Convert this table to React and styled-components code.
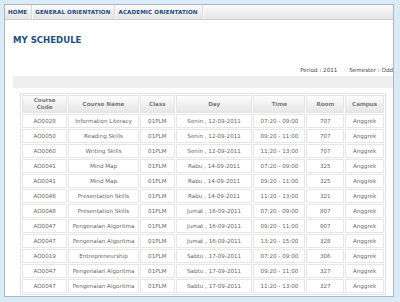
import React from 'react';
import styled, { createGlobalStyle } from 'styled-components';

const GlobalStyle = createGlobalStyle`
  html, body {
    margin: 0;
    padding: 0;
    background: #d9ebf6;
  }
  body {
    font-family: "DejaVu Sans", Verdana, sans-serif;
  }
`;

const Frame = styled.div`
  width: 400px;
  height: 302px;
  padding: 4px 6px 4px 4px;
  box-sizing: border-box;
  overflow: hidden;
`;

const Panel = styled.div`
  background: #fff;
  border: 1px solid #aab6c0;
  height: 293px;
  box-sizing: border-box;
  overflow: hidden;
`;

const NavBar = styled.nav`
  display: flex;
  align-items: stretch;
  height: 14px;
  background: linear-gradient(to bottom, #fbfbfb, #e4e4e4);
  border-bottom: 1px solid #cfcfcf;
`;

const NavItem = styled.a`
  display: flex;
  align-items: center;
  padding: 0 4px 0 3px;
  font-size: 5.6px;
  font-weight: bold;
  color: #1d4c7c;
  letter-spacing: 0.1px;
  border-right: 1px solid #dadada;
  box-shadow: 1px 0 0 #fff;
  text-decoration: none;
`;

const Content = styled.div`
  padding: 14px 0 0 8px;
`;

const Title = styled.h1`
  margin: 0;
  font-family: "DejaVu Sans Condensed", "DejaVu Sans", sans-serif;
  font-size: 9.5px;
  font-weight: bold;
  color: #1d4f7e;
`;

const InfoRow = styled.div`
  display: flex;
  justify-content: flex-end;
  gap: 12px;
  margin-top: 22px;
  font-size: 5.6px;
  color: #444;
  white-space: nowrap;
`;

const Band = styled.div`
  height: 12px;
  margin-top: 3px;
  background: #efefef;
`;

const TableWrap = styled.div`
  padding: 5px 0 0 7px;
`;

const Table = styled.table`
  width: 366px;
  border-collapse: separate;
  border-spacing: 1px;
  border: 1px solid #e2e2e2;
  font-size: 5.6px;
  color: #666;
`;

const Th = styled.th`
  height: 16px;
  padding: 0 2px;
  font-weight: bold;
  color: #7a7a7a;
  background: linear-gradient(to bottom, #fdfdfd, #e6e6e6);
  border: 1px solid #e4e4e4;
  line-height: 1.25;
  width: ${({ w }) => w}px;
`;

const Td = styled.td`
  height: 12px;
  padding: 0 2px;
  text-align: center;
  border: 1px solid #e6e6e6;
`;

const rows = [
  ['AO0028', 'Information Literacy', '01PLM', 'Senin , 12-09-2011', '07:20 - 09:00', '707'],
  ['AO0050', 'Reading Skills', '01PLM', 'Senin , 12-09-2011', '09:20 - 11:00', '707'],
  ['AO0060', 'Writing Skills', '01PLM', 'Senin , 12-09-2011', '11:20 - 13:00', '707'],
  ['AO0041', 'Mind Map', '01PLM', 'Rabu , 14-09-2011', '07:20 - 09:00', '325'],
  ['AO0041', 'Mind Map', '01PLM', 'Rabu , 14-09-2011', '09:20 - 11:00', '325'],
  ['AO0048', 'Presentation Skills', '01PLM', 'Rabu , 14-09-2011', '11:20 - 13:00', '321'],
  ['AO0048', 'Presentation Skills', '01PLM', 'Jumat , 16-09-2011', '07:20 - 09:00', '807'],
  ['AO0047', 'Pengenalan Algoritma', '01PLM', 'Jumat , 16-09-2011', '09:20 - 11:00', '807'],
  ['AO0047', 'Pengenalan Algoritma', '01PLM', 'Jumat , 16-09-2011', '13:20 - 15:00', '328'],
  ['AO0019', 'Entrepreneurship', '01PLM', 'Sabtu , 17-09-2011', '07:20 - 09:00', '306'],
  ['AO0047', 'Pengenalan Algoritma', '01PLM', 'Sabtu , 17-09-2011', '09:20 - 11:00', '327'],
  ['AO0047', 'Pengenalan Algoritma', '01PLM', 'Sabtu , 17-09-2011', '11:20 - 13:00', '327'],
];

const headers = [
  ['Course Code', 42],
  ['Course Name', 67],
  ['Class', 31],
  ['Day', 79],
  ['Time', 51],
  ['Room', 34],
  ['Campus', 34],
];

export default function App() {
  return (
    <>
      <GlobalStyle />
      <Frame>
        <Panel>
          <NavBar>
            <NavItem>HOME</NavItem>
            <NavItem>GENERAL ORIENTATION</NavItem>
            <NavItem>ACADEMIC ORIENTATION</NavItem>
          </NavBar>
          <Content>
            <Title>MY SCHEDULE</Title>
            <InfoRow>
              <span>Period : 2011</span>
              <span>Semester : Odd</span>
            </InfoRow>
            <Band />
            <TableWrap>
              <Table>
                <thead>
                  <tr>
                    {headers.map(([h, w]) => (
                      <Th key={h} w={w}>
                        {h === 'Course Code' ? <>Course<br />Code</> : h}
                      </Th>
                    ))}
                  </tr>
                </thead>
                <tbody>
                  {rows.map((r, i) => (
                    <tr key={i}>
                      {r.map((c, j) => <Td key={j}>{c}</Td>)}
                      <Td>Anggrek</Td>
                    </tr>
                  ))}
                </tbody>
              </Table>
            </TableWrap>
          </Content>
        </Panel>
      </Frame>
    </>
  );
}
